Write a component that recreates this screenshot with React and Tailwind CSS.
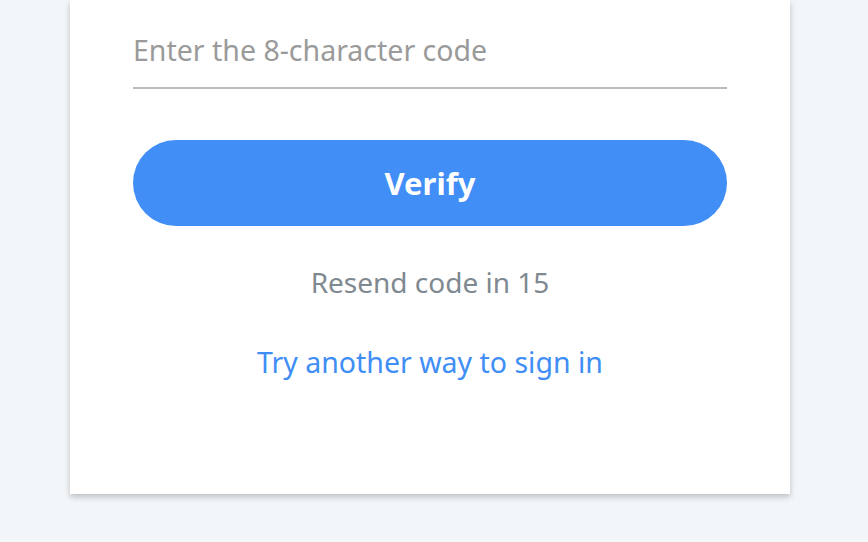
export default function App() {
  return (
    <div className="min-h-screen bg-[#f2f6f9] font-['Noto_Sans',sans-serif]">
      <div className="ml-[70px] w-[720px] bg-white px-[63px] pt-[12px] pb-[114px] shadow-[0_3px_6px_rgba(0,0,0,0.22)]">
        <input
          type="text"
          placeholder="Enter the 8-character code"
          className="block h-[77px] w-full border-b-2 border-[#b9bdc1] bg-transparent text-[28.5px] text-[#333] outline-none placeholder:text-[#9a9a9a]"
        />
        <button className="mt-[51px] flex h-[86px] w-full items-center justify-center rounded-full bg-[#428ef7] text-[31px] font-bold text-white">
          Verify
        </button>
        <p className="mt-[38px] text-center text-[28px] leading-[36px] text-[#7f8991]">
          Resend code in 15
        </p>
        <p className="mt-[44px] text-center text-[28.5px] leading-[36px] text-[#3f8ef6]">
          <a href="#">Try another way to sign in</a>
        </p>
      </div>
    </div>
  );
}
